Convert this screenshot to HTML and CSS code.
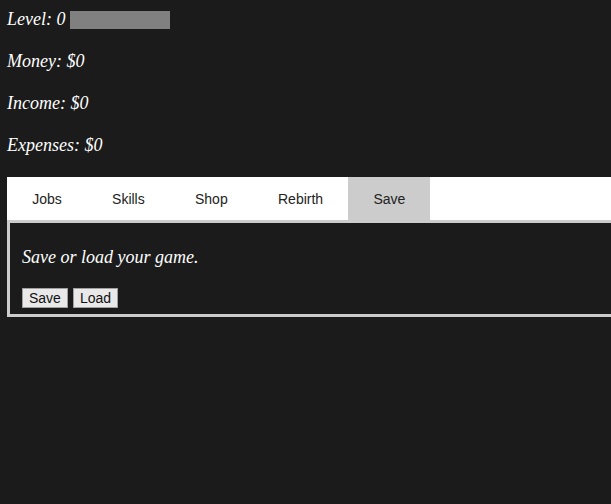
FILE: index.html
```html
<!DOCTYPE html>
<html>
<head>
<meta charset="utf-8">
<link rel="stylesheet" href="styles.css">
</head>
<body>
<div class="page">
  <div class="stats">
    <p class="stat">Level: 0 <span class="level-bar"></span></p>
    <p class="stat">Money: $0</p>
    <p class="stat">Income: $0</p>
    <p class="stat">Expenses: $0</p>
  </div>
  <div class="tabs">
    <div class="tab">Jobs</div>
    <div class="tab">Skills</div>
    <div class="tab">Shop</div>
    <div class="tab">Rebirth</div>
    <div class="tab active">Save</div>
  </div>
  <div class="panel">
    <p class="panel-text">Save or load your game.</p>
    <div class="buttons">
      <button class="btn">Save</button>
      <button class="btn">Load</button>
    </div>
  </div>
</div>
</body>
</html>
```
FILE: styles.css
```css
html, body {
  margin: 0;
  padding: 0;
  background: #1b1b1b;
  overflow: hidden;
}
.page {
  padding: 7px 0 0 7px;
  font-family: "Liberation Serif", "Times New Roman", serif;
  color: #ffffff;
}
.stats {
  margin-bottom: 20px;
}
.stat {
  margin: 0 0 18px 0;
  font-size: 18px;
  font-style: italic;
  line-height: 24px;
}
.stat:last-child {
  margin-bottom: 0;
}
.level-bar {
  display: inline-block;
  width: 100px;
  height: 18px;
  background: #808080;
  vertical-align: -4px;
}
.tabs {
  display: flex;
  background: #ffffff;
  height: 43px;
}
.tab {
  display: flex;
  align-items: center;
  justify-content: center;
  padding: 0 25.1px 0 25.2px;
  font-family: "Liberation Sans", Arial, sans-serif;
  font-size: 14px;
  color: #222222;
}
.tab.active {
  background: #cccccc;
}
.panel {
  border: 3px solid #cccccc;
  border-right: 0;
  padding: 22px 12px 6px 12px;
}
.panel-text {
  margin: 0 0 19px 0;
  font-size: 18px;
  font-style: italic;
  line-height: 24px;
}
.buttons {
  display: flex;
  gap: 5px;
}
.btn {
  height: 20px;
  padding: 0 6px;
  margin: 0;
  font-family: "Liberation Sans", Arial, sans-serif;
  font-size: 14px;
  color: #111111;
  background: #e9e9e9;
  border: 1px solid #a0a0a0;
  border-radius: 0;
}
```
